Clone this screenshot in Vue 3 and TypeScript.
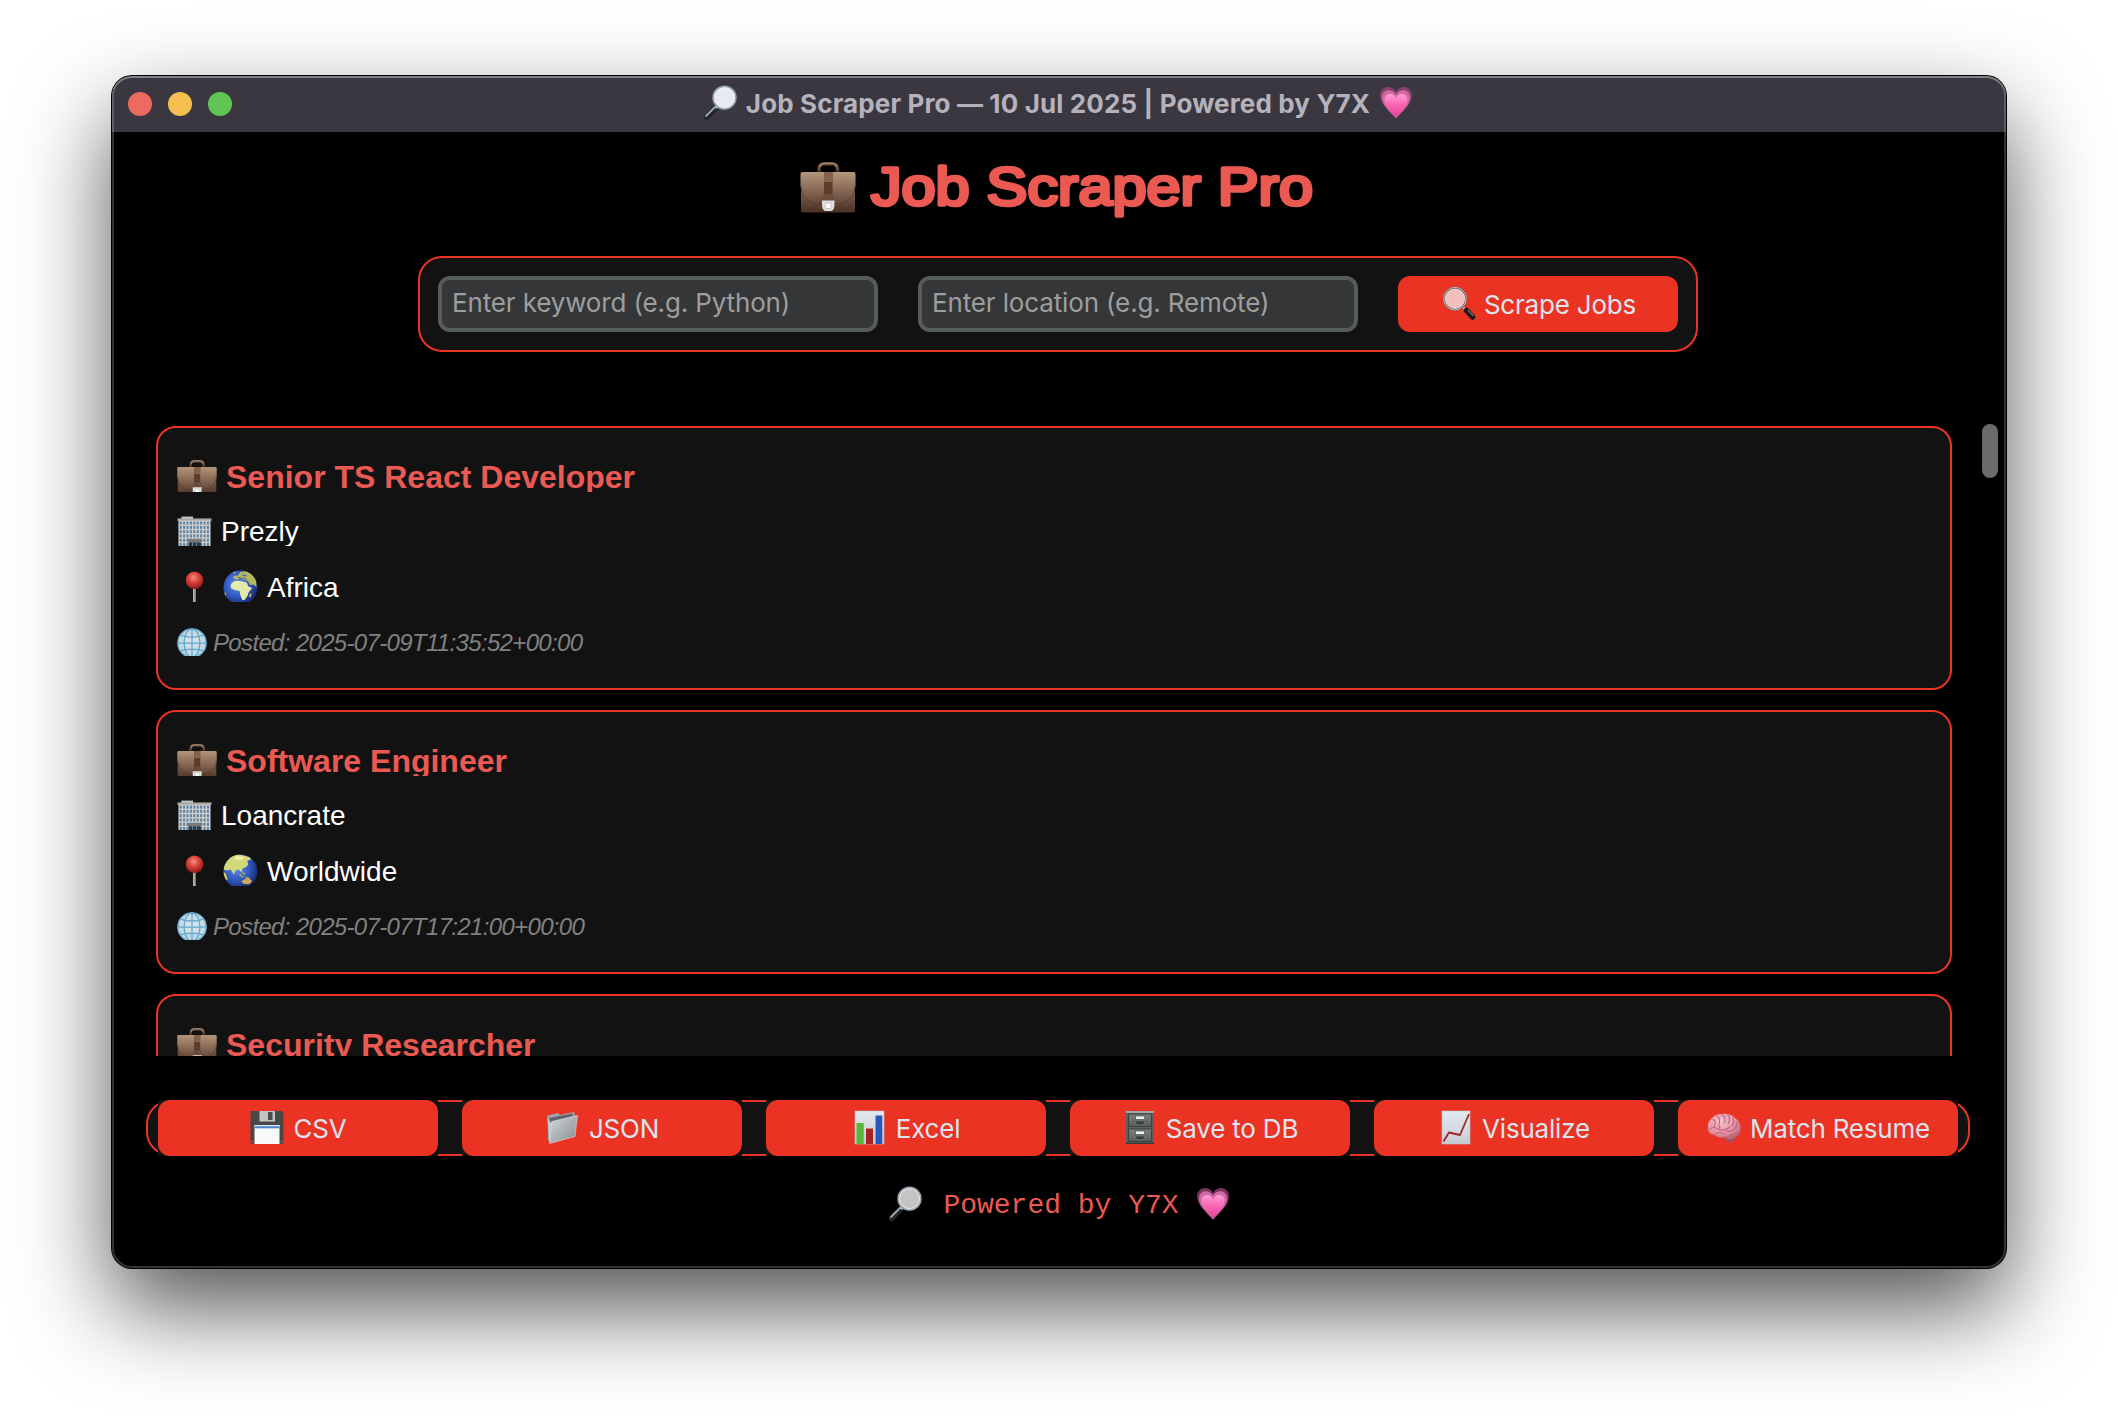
<script setup lang="ts">
interface Job {
  title: string
  company: string
  globe: 'africa' | 'asia'
  location: string
  posted: string
}

interface Action {
  icon: string
  label: string
}

const jobs: Job[] = [
  { title: 'Senior TS React Developer', company: 'Prezly', globe: 'africa', location: 'Africa', posted: '2025-07-09T11:35:52+00:00' },
  { title: 'Software Engineer', company: 'Loancrate', globe: 'asia', location: 'Worldwide', posted: '2025-07-07T17:21:00+00:00' },
  { title: 'Security Researcher', company: '', globe: 'asia', location: '', posted: '' },
]

const actions: Action[] = [
  { icon: 'floppy', label: 'CSV' },
  { icon: 'folder', label: 'JSON' },
  { icon: 'bars', label: 'Excel' },
  { icon: 'cabinet', label: 'Save to DB' },
  { icon: 'chart', label: 'Visualize' },
  { icon: 'brain', label: 'Match Resume' },
]
</script>

<template>
  <div class="desktop">
    <svg class="sprite" width="0" height="0" aria-hidden="true">
      <defs>
        <linearGradient id="g-leather" x1="0" y1="0" x2="0" y2="1">
          <stop offset="0" stop-color="#b09478" /><stop offset=".35" stop-color="#8a6b55" /><stop offset="1" stop-color="#4b3026" />
        </linearGradient>
        <linearGradient id="g-flap" x1="0" y1="0" x2="0" y2="1">
          <stop offset="0" stop-color="#b3967a" /><stop offset="1" stop-color="#64463a" />
        </linearGradient>
        <linearGradient id="g-folder" x1="0" y1="0" x2="1" y2="1">
          <stop offset="0" stop-color="#d3d7da" /><stop offset="1" stop-color="#868c91" />
        </linearGradient>
        <linearGradient id="g-paper" x1="0" y1="0" x2="0" y2="1">
          <stop offset="0" stop-color="#e3eaf2" /><stop offset="1" stop-color="#c5ccd4" />
        </linearGradient>
        <linearGradient id="g-cab" x1="0" y1="0" x2="0" y2="1">
          <stop offset="0" stop-color="#7b8180" /><stop offset="1" stop-color="#565d5c" />
        </linearGradient>
        <radialGradient id="g-sea" cx=".4" cy=".4" r=".62">
          <stop offset="0" stop-color="#5d8fe8" /><stop offset=".6" stop-color="#3157c0" /><stop offset="1" stop-color="#172a70" />
        </radialGradient>
        <radialGradient id="g-pin" cx=".45" cy=".35" r=".6">
          <stop offset="0" stop-color="#f58a80" /><stop offset=".5" stop-color="#d8453d" /><stop offset="1" stop-color="#97201e" />
        </radialGradient>
        <radialGradient id="g-mesh" cx=".5" cy=".45" r=".6">
          <stop offset="0" stop-color="#dfe5e8" /><stop offset="1" stop-color="#b5d3e2" />
        </radialGradient>
        <linearGradient id="g-heart" x1="0" y1="0" x2="0" y2="1">
          <stop offset="0" stop-color="#ff9fd4" /><stop offset=".5" stop-color="#fa62b4" /><stop offset="1" stop-color="#e04595" />
        </linearGradient>
        <radialGradient id="g-brain" cx=".4" cy=".3" r=".8">
          <stop offset="0" stop-color="#f9c3cd" /><stop offset=".6" stop-color="#e58fa2" /><stop offset="1" stop-color="#b25a70" />
        </radialGradient>
        <clipPath id="c-globe"><circle cx="18" cy="18" r="17.500" /></clipPath>
      </defs>

      <symbol id="i-case" viewBox="0 0 56 51" preserveAspectRatio="none">
        <path d="M19 12V6.500Q19 2 23.500 2H33Q37.500 2 37.500 6.500V12" fill="none" stroke="#6a4b38" stroke-width="3.200" />
        <path d="M20 5Q21 1.300 24 1.300H32.500Q35.500 1.300 36.500 5" fill="none" stroke="#a98b6e" stroke-width="1.600" />
        <path d="M17 8.500H21V12H17ZM35.500 8.500H39.500V12H35.500Z" fill="#3a281e" />
        <rect x="1" y="10" width="54" height="40.500" rx="1.800" fill="url(#g-leather)" />
        <path d="M.5 12Q.5 10 2.500 10H53.500Q55.500 10 55.500 12V24Q54 40 38 42H18Q2 40 .5 24Z" fill="url(#g-flap)" />
        <path d="M.8 24Q2.500 40 18 42H38Q53.500 40 55.200 24" fill="none" stroke="#4c3429" stroke-width="1" opacity=".7" />
        <rect x="24" y="10" width="8.500" height="29" fill="#5b3d2e" />
        <rect x="24" y="10" width="8.500" height="10" fill="#85634b" />
        <path d="M22 37L24 32H32.500L34.500 37V40H22Z" fill="#6d4d3a" />
        <path d="M22 38.500H34.500V43Q34 49 30.500 49H26Q22.500 49 22 43Z" fill="#dedede" />
        <rect x="25.200" y="41" width="6" height="5.500" rx="1.500" fill="#fff" stroke="#b5b5b5" stroke-width=".8" />
      </symbol>

      <symbol id="i-glass-l" viewBox="0 0 36 36">
        <path d="M14.500 22L4.500 32.500" stroke="#20262b" stroke-width="5.500" stroke-linecap="round" />
        <path d="M13.500 21.500L4 31" stroke="#9aa5ad" stroke-width="1.800" stroke-linecap="round" />
        <path d="M17 20L14 23" stroke="#b9c0c6" stroke-width="2.500" />
        <ellipse cx="22.500" cy="12.700" rx="11.300" ry="11.300" class="lens" stroke="#98a3ae" stroke-width="1.800" />
        <ellipse cx="22.500" cy="12.700" rx="10" ry="10" fill="none" stroke="#f5f7fa" stroke-width=".8" />
      </symbol>

      <symbol id="i-glass-r" viewBox="0 0 36 36">
        <g transform="translate(1.500 -.5)">
          <path d="M22 22L24.500 25" stroke="#b5b5b5" stroke-width="2.500" />
          <path d="M25 25L31 31.500" stroke="#17191c" stroke-width="5.500" stroke-linecap="round" />
          <path d="M26.500 24.800L31.500 30" stroke="#777" stroke-width="1.200" stroke-linecap="round" />
          <circle cx="13.500" cy="13.200" r="11" fill="#f3bfbd" stroke="#5f5555" stroke-width="2" />
          <circle cx="13.500" cy="13.200" r="11.300" fill="none" stroke="#c9c2c2" stroke-width="1" />
          <circle cx="13.500" cy="13.200" r="9.600" fill="none" stroke="#fadedd" stroke-width=".7" />
        </g>
      </symbol>

      <symbol id="i-heart" viewBox="0 0 36 36">
        <path d="M18 34C10 25 2 19 2 10.500C2 5 6 2 10 2C14 2 17 4.500 18 7C19 4.500 22 2 26 2C30 2 34 5 34 10.500C34 19 26 25 18 34Z" fill="#a0457c" opacity=".75" />
        <path d="M18 33C10.500 25 4 19.500 4 12.500C4 8 7 5.300 10.500 5.300C14 5.300 17 7.500 18 10C19 7.500 22 5.300 25.500 5.300C29 5.300 32 8 32 12.500C32 19.500 25.500 25 18 33Z" fill="#d169a4" />
        <path d="M18 32C12 25.500 6.500 20.500 6.500 15C6.500 11 9 9 12 9C15 9 17 11 18 13.200C19 11 21 9 24 9C27 9 29.500 11 29.500 15C29.500 20.500 24 25.500 18 32Z" fill="url(#g-heart)" />
      </symbol>

      <symbol id="i-office" viewBox="0 0 36 36">
        <rect x="4.500" y=".6" width="12" height="3" fill="#c2c8c8" />
        <rect x=".5" y="2.500" width="35" height="2.500" fill="#a7a9a8" />
        <rect x="1.500" y="4.500" width="33" height="31" fill="#cfcecb" />
        <g fill="#5680a4">
          <template v-for="r in 6" :key="r">
            <rect v-for="c in 9" :key="c" :x="c * 3.5 - 0.7" :y="r * 4.4 + 1.4" width="2" height="3" />
          </template>
        </g>
        <rect x="10.500" y="23.500" width="15.500" height="3.500" fill="#77797a" />
        <rect x="12" y="27" width="12.500" height="9" fill="#22394c" />
        <path d="M16 27V36M20 27V36" stroke="#7592a6" stroke-width=".9" />
      </symbol>

      <symbol id="i-pin" viewBox="0 0 36 36">
        <path d="M18 17V36" stroke="#8e817a" stroke-width="3" />
        <path d="M17.300 17V36" stroke="#d8d0c8" stroke-width="1" />
        <circle cx="18" cy="10.500" r="9" fill="url(#g-pin)" />
      </symbol>

      <symbol id="i-africa" viewBox="0 0 36 36">
        <circle cx="18" cy="18" r="17.500" fill="url(#g-sea)" />
        <g clip-path="url(#c-globe)">
          <path d="M8 15Q10 11 15 11L20 11.500L24.500 13L26 17L30 18.500L26.500 22.500L25.500 26L22.500 30.500L20 31L18 26.500L17 21.500L12 20.500L8 18.500Z" fill="#e4ebaa" />
          <path d="M10 8L12 6L15 6L18 2L24 1L31 5L34 11L34.500 18L31.500 15L28 15.500L25.500 11L21 10L18 8L14 10Z" fill="#b3b95a" />
          <path d="M16 7.500L19 9M20 5L24 6M20 8L24 9.500" stroke="#3c65b8" stroke-width="1.300" />
          <path d="M0 22L3 24L3.500 30L0 28Z" fill="#c8c04f" />
          <path d="M28 24L29.500 25L28 28.500L27 27Z" fill="#cdbf5c" />
          <path d="M10 2L13 1L12 4Z" fill="#a9b778" />
        </g>
      </symbol>

      <symbol id="i-asia" viewBox="0 0 36 36">
        <circle cx="18" cy="18" r="17.500" fill="url(#g-sea)" />
        <g clip-path="url(#c-globe)">
          <path d="M1 10Q6 2 15 0L27 3L29 6L25 7L26 11L23 14L20 15L19 19L16 16L13 17L11 21L8 16L4 17L0 16Z" fill="#d4d978" />
          <path d="M13 2L22 3L19 6L12 6Z" fill="#eff0b4" />
          <path d="M17 21L21 24M20 19L23 21M23 24L27 25" stroke="#9faf58" stroke-width="1.500" />
          <path d="M19 28L23 25.500L27 25L30 28L27 31L21 30.500Z" fill="#ccab55" />
          <path d="M0 18L3 20L5 27L2 26Z" fill="#cdc45a" />
        </g>
      </symbol>

      <symbol id="i-mesh" viewBox="0 0 36 36">
        <circle cx="18" cy="18" r="17" fill="url(#g-mesh)" stroke="#6fb0d2" stroke-width="1.600" />
        <g fill="none" stroke="#5fa6cc" stroke-width="1.500">
          <ellipse cx="18" cy="18" rx="9.500" ry="17" />
          <path d="M18 1V35M1 18H35M4 8.500Q18 13.500 32 8.500M4 27.500Q18 23 32 27.500" />
        </g>
      </symbol>

      <symbol id="i-floppy" viewBox="0 0 36 36">
        <path d="M1.500 1H32.500L34.500 3V34H1.500Z" fill="#484848" />
        <rect x="10.500" y="1" width="15.500" height="10.500" fill="#c2c4c4" />
        <rect x="19" y="2" width="4.500" height="8" fill="#4c4d4e" />
        <rect x="5.500" y="15" width="25" height="19" fill="#f8f8f8" />
        <rect x="5.500" y="15" width="25" height="2" fill="#dbe6f4" />
        <rect x="5.500" y="16.300" width="25" height="2" fill="#4a7fc4" />
        <path d="M2.500 30.500H4V32.500H2.500ZM32 30.500H33.500V32.500H32Z" fill="#e23a2b" />
      </symbol>

      <symbol id="i-folder" viewBox="0 0 36 36">
        <path d="M2.500 5.500L13 3L15 5L29 2L30 6L6 30L3 31Z" fill="#9da4aa" />
        <path d="M4 8L27.500 3.500L28 8L5 14Z" fill="#5d656b" />
        <path d="M2.500 6L4.500 33L6 14Z" fill="#c6cbcf" />
        <path d="M6.500 11.500L32.500 5.500L30 26.500L4.500 33.500Z" fill="url(#g-folder)" stroke="#eceff1" stroke-width=".5" />
      </symbol>

      <symbol id="i-bars" viewBox="0 0 36 36">
        <rect x="3" y="1" width="29" height="33" fill="url(#g-paper)" stroke="#b9c1c8" stroke-width=".6" />
        <rect x="4.500" y="13" width="7.200" height="21" fill="#55b83c" />
        <rect x="14" y="18.500" width="7" height="15.500" fill="#a82420" />
        <rect x="23.500" y="5.500" width="6.800" height="28.500" fill="#2858bd" />
      </symbol>

      <symbol id="i-cabinet" viewBox="0 0 36 36">
        <rect x="4" y="1" width="28" height="33" rx=".8" fill="#596160" />
        <rect x="4" y="1" width="28" height="2" fill="#a5abaa" />
        <g v-for="y in [4, 19]" :key="y">
          <rect x="6.500" :y="y" width="23" height="12.500" fill="url(#g-cab)" stroke="#3b4241" stroke-width="1" />
          <rect x="13.500" :y="y + 2" width="9" height="3.500" fill="#eef0f0" stroke="#3c4241" stroke-width=".6" />
          <path :d="`M14 ${y + 7.5}H22Q22 ${y + 10} 20 ${y + 10}H16Q14 ${y + 10} 14 ${y + 7.5}Z`" fill="#363c3b" />
        </g>
        <rect x="4" y="32.500" width="28" height="1.500" fill="#363c3b" />
      </symbol>

      <symbol id="i-chart" viewBox="0 0 36 36">
        <rect x="4" y="1" width="28" height="33" fill="url(#g-paper)" stroke="#b9c1c8" stroke-width=".6" />
        <path d="M5.500 31.500L11 22.500L22 25L31 4" fill="none" stroke="#a02623" stroke-width="1.800" stroke-linejoin="round" />
      </symbol>

      <symbol id="i-brain" viewBox="0 0 36 36">
        <path d="M19 26Q19 32 24 32.500Q29 32 29 27L27 23Z" fill="#9f5266" />
        <path d="M2 18Q1 12 6 8Q9 4 16 4Q24 3 29 8Q35 12 34.500 19Q35 25 29 28Q23 31 19 27Q13 29 8 25Q2 25 2 18Z" fill="url(#g-brain)" />
        <path d="M7 9Q11 12 8 17M11 6Q15 9 13 14Q12 16 14 18M16 5Q21 8 18 13M22 5Q25 9 22 14M27 8Q29 12 26 16M3.500 19Q8 16 12 19Q18 22 24 17M31 12Q31 17 27 20Q24 22 20 21M9 24Q13 21 18 24M20 27Q25 26 32 22" fill="none" stroke="#b8667c" stroke-width="1.100" stroke-linecap="round" />
      </symbol>
    </svg>

    <main class="window">
      <header class="titlebar">
        <div class="lights"><i class="red"></i><i class="amber"></i><i class="green"></i></div>
        <div class="title">
          <svg class="ico bright"><use href="#i-glass-l" /></svg>
          <span class="title-text">Job Scraper Pro — 10 Jul 2025 | Powered by Y7X</span>
          <svg class="ico"><use href="#i-heart" /></svg>
        </div>
      </header>

      <h1 class="heading">
        <svg class="case-big"><use href="#i-case" /></svg>
        <svg class="heading-text" width="450" height="64">
          <text x="3" y="47.500" textLength="442" lengthAdjust="spacingAndGlyphs">Job Scraper Pro</text>
        </svg>
      </h1>

      <form class="search" @submit.prevent>
        <input class="field keyword" type="text" placeholder="Enter keyword (e.g. Python)" />
        <input class="field location" type="text" placeholder="Enter location (e.g. Remote)" />
        <button class="btn" type="submit">
          <svg class="ico"><use href="#i-glass-r" /></svg><span>Scrape Jobs</span>
        </button>
      </form>

      <section class="results">
        <div class="list">
          <article v-for="job in jobs" :key="job.title" class="card">
            <div class="row name"><svg><use href="#i-case" /></svg><span>{{ job.title }}</span></div>
            <template v-if="job.company">
              <div class="row company"><svg><use href="#i-office" /></svg><span>{{ job.company }}</span></div>
              <div class="row place">
                <svg><use href="#i-pin" /></svg>
                <svg class="globe"><use :href="`#i-${job.globe}`" /></svg>
                <span>{{ job.location }}</span>
              </div>
              <div class="row posted"><svg><use href="#i-mesh" /></svg><span>Posted: {{ job.posted }}</span></div>
            </template>
          </article>
        </div>
        <div class="thumb"></div>
      </section>

      <nav class="actions">
        <div v-for="a in actions" :key="a.label" class="slot">
          <button class="btn" type="button">
            <svg class="ico"><use :href="`#i-${a.icon}`" /></svg><span>{{ a.label }}</span>
          </button>
        </div>
      </nav>

      <footer class="footer">
        <svg class="ico"><use href="#i-glass-l" /></svg>
        <span>Powered by Y7X</span>
        <svg class="ico"><use href="#i-heart" /></svg>
      </footer>
    </main>
  </div>
</template>

<style>
body {
  margin: 0;
  background: #fff;
}
</style>

<style scoped>
* {
  box-sizing: border-box;
}

.desktop {
  width: 2118px;
  height: 1416px;
  padding: 76px 112px;
  overflow: hidden;
  background: #fff;
  font-family: Inter, 'Liberation Sans', sans-serif;
}

.sprite {
  position: absolute;
}

.window {
  position: relative;
  display: flex;
  flex-direction: column;
  width: 1894px;
  height: 1192px;
  border-radius: 20px;
  background: #000;
  box-shadow: 0 0 0 1px #000, 0 40px 92px rgba(0, 0, 0, 0.68);
}

/* thin highlight that runs round the inside of the window frame */
.window::after {
  content: '';
  position: absolute;
  inset: 0;
  border: 2px solid rgba(255, 255, 255, 0.2);
  border-radius: 20px;
  pointer-events: none;
}

.titlebar {
  display: flex;
  align-items: center;
  height: 56px;
  padding: 0 16px;
  border-radius: 20px 20px 0 0;
  background: #3a3740;
  box-shadow: inset 0 2px 0 rgba(255, 255, 255, 0.2);
}

.lights {
  display: flex;
  gap: 16px;
  width: 104px;
}

.lights i {
  width: 24px;
  height: 24px;
  border-radius: 50%;
}

.red { background: #ec6a5e; }
.amber { background: #f4bf4f; }
.green { background: #61c554; }

.title {
  display: flex;
  flex: 1;
  align-items: center;
  justify-content: center;
  gap: 8px;
  margin-right: 106px;
  padding-bottom: 2px;
  color: #b5b2bc;
  font-size: 26px;
  font-weight: 700;
  letter-spacing: 0.14px;
  white-space: nowrap;
}

.ico {
  flex: none;
  width: 36px;
  height: 36px;
  fill: #c4c4c4;
}

.bright {
  fill: #e9e9f3;
}

.heading {
  display: flex;
  align-items: flex-start;
  justify-content: center;
  gap: 12px;
  height: 124px;
  margin: 0;
  padding-top: 25px;
}

.case-big {
  width: 56px;
  height: 51px;
  margin-top: 5px;
}

.heading-text {
  overflow: visible;
  fill: #eb5a52;
  stroke: #eb5a52;
  stroke-width: 3.6px;
  stroke-linejoin: round;
  font-family: 'Liberation Sans', Arial, sans-serif;
  font-size: 54px;
  font-weight: 400;
}

.search {
  display: flex;
  align-items: center;
  align-self: flex-start;
  gap: 40px;
  width: 1280px;
  height: 96px;
  margin-left: 306px;
  padding: 0 18px;
  border: 2px solid #ea3323;
  border-radius: 24px;
  background: #121212;
}

.field {
  width: 440px;
  height: 56px;
  padding: 0 10px 3px;
  border: 4px solid #565b5e;
  border-radius: 12px;
  outline: 0;
  background: #343638;
  color: #dce4ee;
  font: 400 26px Inter, sans-serif;
  letter-spacing: -0.14px;
}

.field::placeholder {
  color: #9e9e9e;
  opacity: 1;
}

.btn {
  display: flex;
  align-items: center;
  justify-content: center;
  gap: 8px;
  width: 280px;
  height: 56px;
  padding: 0;
  border: 0;
  border-radius: 12px;
  background: #ea3323;
  color: #dce4ee;
  font: 400 26px Inter, sans-serif;
  letter-spacing: -0.2px;
  white-space: nowrap;
}

.results {
  display: flex;
  align-items: flex-start;
  justify-content: space-between;
  height: 632px;
  margin-top: 72px;
  padding: 0 8px 0 44px;
}

.list {
  display: flex;
  flex-direction: column;
  gap: 20px;
  width: 1796px;
  height: 632px;
  padding-top: 2px;
  overflow: hidden;
}

.card {
  flex: none;
  height: 264px;
  padding: 32px 19px 0;
  border: 2px solid #ea3323;
  border-radius: 20px;
  background: #121212;
  font-family: 'Liberation Sans', Arial, sans-serif;
}

.row {
  display: flex;
  align-items: flex-start;
  overflow: hidden;
  white-space: nowrap;
}

.row svg {
  flex: none;
}

.name {
  height: 32px;
  color: #eb5a52;
  font-size: 32px;
  font-weight: 700;
  line-height: 34px;
}

.name svg {
  width: 40px;
  height: 36px;
  margin-right: 9px;
}

.company {
  height: 30px;
  margin-top: 24px;
  color: #fff;
  font-size: 28px;
  line-height: 32px;
}

.company svg {
  width: 35px;
  height: 35px;
  margin-right: 9px;
}

.place {
  height: 32px;
  margin-top: 24px;
  color: #fff;
  font-size: 28px;
  line-height: 36px;
}

.place svg {
  width: 35px;
  height: 35px;
}

.place .globe {
  margin: 0 9px 0 11px;
}

.posted {
  height: 28px;
  margin-top: 26px;
  color: #808080;
  font-size: 24px;
  font-style: italic;
  line-height: 30px;
  letter-spacing: -0.66px;
}

.posted svg {
  width: 30px;
  height: 30px;
  margin-right: 6px;
}

.thumb {
  width: 16px;
  height: 54px;
  border-radius: 8px;
  background: #6b6b6b;
}

.actions {
  display: flex;
  gap: 24px;
  width: 1824px;
  height: 56px;
  margin: 44px 0 0 34px;
  padding-left: 10px;
  border: 2px solid #ea3323;
  border-radius: 24px;
  background: #121212;
}

/* slots paint over the frame so its border shows only between buttons */
.slot {
  height: 56px;
  margin-top: -2px;
  background: #121212;
}

.footer {
  display: flex;
  align-items: center;
  justify-content: center;
  gap: 18px;
  margin-top: 30px;
  color: #eb5a52;
  font-family: 'Courier New', 'Liberation Mono', monospace;
  font-size: 28px;
}

.footer span {
  margin: 3px -2px 0 2px;
}
</style>
